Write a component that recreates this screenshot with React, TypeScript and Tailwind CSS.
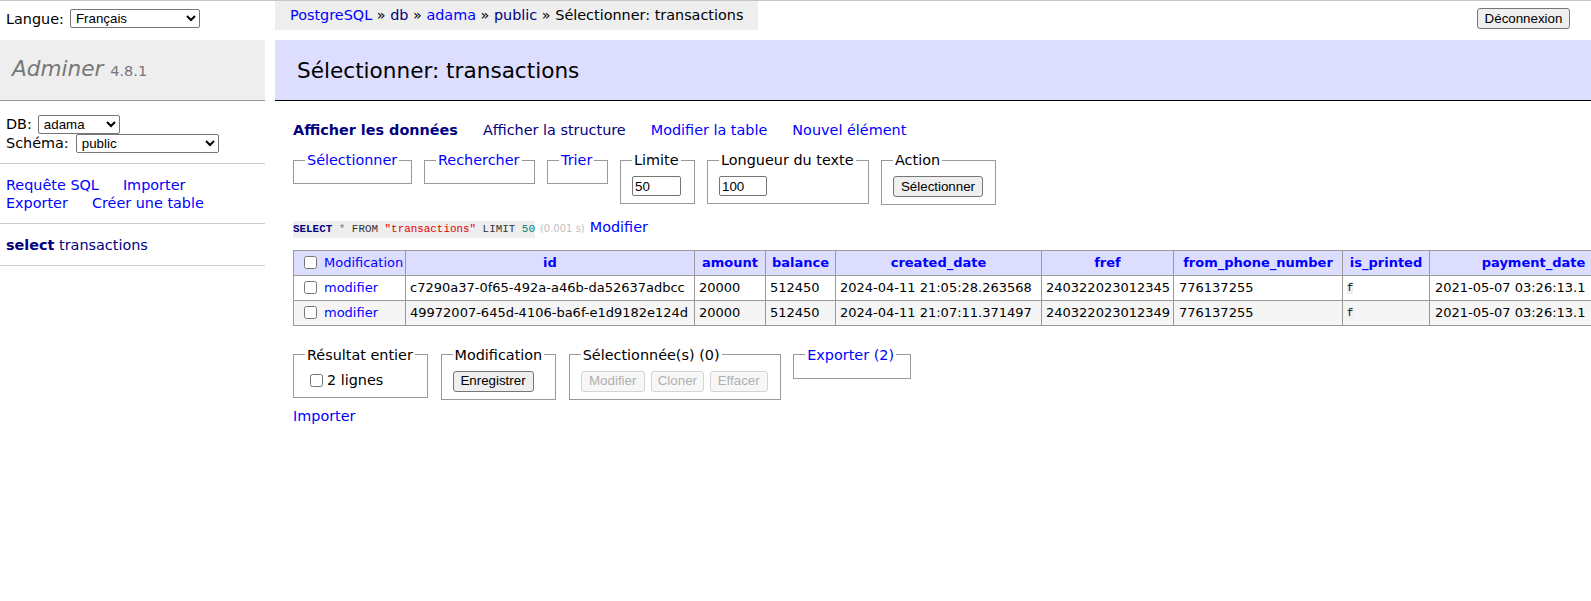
import React from 'react'

type Row = {
  id: string
  amount: string
  balance: string
  created: string
  fref: string
  phone: string
  printed: string
  payment: string
}

const rows: Row[] = [
  {
    id: 'c7290a37-0f65-492a-a46b-da52637adbcc',
    amount: '20000',
    balance: '512450',
    created: '2024-04-11 21:05:28.263568',
    fref: '240322023012345',
    phone: '776137255',
    printed: 'f',
    payment: '2021-05-07 03:26:13.1',
  },
  {
    id: '49972007-645d-4106-ba6f-e1d9182e124d',
    amount: '20000',
    balance: '512450',
    created: '2024-04-11 21:07:11.371497',
    fref: '240322023012349',
    phone: '776137255',
    printed: 'f',
    payment: '2021-05-07 03:26:13.1',
  },
]

const headers = ['id', 'amount', 'balance', 'created_date', 'fref', 'from_phone_number', 'is_printed', 'payment_date']

const sysFont = "font-['Liberation_Sans',Arial,sans-serif] text-[13.33px]"

function Button({ children, disabled, className = '' }: { children: React.ReactNode; disabled?: boolean; className?: string }) {
  return (
    <button
      type="button"
      disabled={disabled}
      className={
        disabled
          ? `h-[21px] rounded-[3px] border border-[#d4d4d4] bg-[#f7f7f7] px-[6px] text-[#b0b0b0] ${sysFont} ${className}`
          : `h-[21px] rounded-[3px] border border-[#767676] bg-[#efefef] px-[6px] text-black ${sysFont} ${className}`
      }
    >
      {children}
    </button>
  )
}

function Box({ legend, width, link, children }: { legend: string; width: string; link?: boolean; children?: React.ReactNode }) {
  return (
    <fieldset className={`shrink-0 border border-[#999] px-[11px] pt-[7px] pb-[7px] ${width}`}>
      <legend className={`px-[2px] ${link ? 'text-[#0000ff]' : 'text-black'}`}>{legend}</legend>
      {children}
    </fieldset>
  )
}

function Sidebar() {
  return (
    <aside className="w-[265px] shrink-0">
      <div className="flex h-[39px] items-start pl-[6px] pt-[8px]">
        <div className="flex items-center">
          Langue:
          <select defaultValue="fr" className={`ml-[6px] h-[19px] w-[130px] rounded-[2px] border border-[#767676] bg-white pl-[1px] text-black ${sysFont}`}>
            <option value="fr">Français</option>
          </select>
        </div>
      </div>
      <h1 className="flex h-[61px] items-center border-b border-[#999] bg-[#eee] pl-[12px] text-[21.6px] font-normal leading-[27px] text-[#777]">
        <span>
          <span className="italic">Adminer</span> <span className="text-[14.5px]">4.8.1</span>
        </span>
      </h1>
      <div className="border-b border-[#ccc] px-[6px] pt-[13.5px] pb-[10.5px]">
        <div className="flex h-[19px] items-center">
          DB:
          <select defaultValue="adama" className={`ml-[6px] h-[19px] w-[82px] rounded-[2px] border border-[#767676] bg-white pl-[1px] text-black ${sysFont}`}>
            <option value="adama">adama</option>
          </select>
        </div>
        <div className="flex h-[19px] items-center">
          Schéma:
          <select defaultValue="public" className={`ml-[7px] h-[19px] w-[143px] rounded-[2px] border border-[#767676] bg-white pl-[1px] text-black ${sysFont}`}>
            <option value="public">public</option>
          </select>
        </div>
      </div>
      <div className="border-b border-[#ccc] px-[6px] py-[11.5px] text-[#0000ff]">
        <div className="flex gap-[24px]">
          <a>Requête SQL</a>
          <a>Importer</a>
        </div>
        <div className="flex gap-[24px]">
          <a>Exporter</a>
          <a>Créer une table</a>
        </div>
      </div>
      <div className="border-b border-[#ccc] px-[6px] py-[11.5px] text-[#000080]">
        <a className="font-bold">select</a> <a>transactions</a>
      </div>
    </aside>
  )
}

function DataTable() {
  return (
    <table className="mt-[11.5px] w-[1344px] table-fixed border-collapse text-[13px] leading-[16px]">
      <colgroup>
        <col className="w-[112px]" />
        <col className="w-[289px]" />
        <col className="w-[71px]" />
        <col className="w-[70px]" />
        <col className="w-[206px]" />
        <col className="w-[132px]" />
        <col className="w-[169px]" />
        <col className="w-[87px]" />
        <col className="w-[208px]" />
      </colgroup>
      <thead>
        <tr className="h-[25px] bg-[#ddf]">
          <td className="border border-[#999] px-[4px] whitespace-nowrap">
            <span className="flex items-center">
              <input type="checkbox" className="ml-[6px] mr-[7px] h-[13px] w-[13px]" />
              <a className="text-[#0000ff]">Modification</a>
            </span>
          </td>
          {headers.map((h) => (
            <th key={h} className="overflow-hidden border border-[#999] px-[6px] text-center font-bold whitespace-nowrap text-[#0000ff]">
              {h}
            </th>
          ))}
        </tr>
      </thead>
      <tbody>
        {rows.map((r, i) => (
          <tr key={r.id} className={i % 2 ? 'h-[25px] bg-[#f5f5f5]' : 'h-[25px] bg-white'}>
            <td className="border border-[#999] px-[4px] whitespace-nowrap">
              <span className="flex items-center">
                <input type="checkbox" className="ml-[6px] mr-[7px] h-[13px] w-[13px]" />
                <a className="text-[#0000ff]">modifier</a>
              </span>
            </td>
            <td className="overflow-hidden border border-[#999] px-[4px] whitespace-nowrap">{r.id}</td>
            <td className="overflow-hidden border border-[#999] px-[4px] whitespace-nowrap">{r.amount}</td>
            <td className="overflow-hidden border border-[#999] px-[4px] whitespace-nowrap">{r.balance}</td>
            <td className="overflow-hidden border border-[#999] px-[4px] whitespace-nowrap">{r.created}</td>
            <td className="overflow-hidden border border-[#999] px-[4px] whitespace-nowrap">{r.fref}</td>
            <td className="overflow-hidden border border-[#999] px-[5px] whitespace-nowrap">{r.phone}</td>
            <td className="overflow-hidden border border-[#999] px-[4px] whitespace-nowrap">
              <code className="bg-[#eee] font-['Liberation_Mono',monospace] text-[10.4px]">{r.printed}</code>
            </td>
            <td className="overflow-hidden border border-[#999] px-[5px] whitespace-nowrap">{r.payment}</td>
          </tr>
        ))}
      </tbody>
    </table>
  )
}

function Content() {
  return (
    <main className="ml-[10px] min-w-0 flex-1">
      <div className="flex h-[39px] items-start justify-between">
        <div className="h-[29px] bg-[#eee] px-[15px] leading-[28px] whitespace-nowrap">
          <a className="text-[#0000ff]">PostgreSQL</a> » <a className="text-[#000080]">db</a> »{' '}
          <a className="text-[#0000ff]">adama</a> » <a className="text-[#000080]">public</a> » Sélectionner: transactions
        </div>
        <Button className="mt-[7px] mr-[21px] w-[93px]">Déconnexion</Button>
      </div>
      <h2 className="flex h-[61px] items-center border-b border-black bg-[#ddf] pl-[22px] text-[21.6px] font-normal leading-[27px] text-black">
        Sélectionner: transactions
      </h2>

      <div className="pl-[18px]">
        <nav className="mt-[20px] flex gap-[25px] whitespace-nowrap">
          <a className="font-bold text-[#000080]">Afficher les données</a>
          <a className="text-[#000080]">Afficher la structure</a>
          <a className="text-[#0000ff]">Modifier la table</a>
          <a className="text-[#0000ff]">Nouvel élément</a>
        </nav>

        <div className="mt-[12px] flex items-start gap-[12px]">
          <Box legend="Sélectionner" width="w-[119px]" link />
          <Box legend="Rechercher" width="w-[111px]" link />
          <Box legend="Trier" width="w-[61px]" link />
          <Box legend="Limite" width="w-[75px]">
            <input defaultValue="50" className={`block h-[20px] w-[49px] rounded-[2px] border border-[#767676] px-[2px] text-black ${sysFont}`} />
          </Box>
          <Box legend="Longueur du texte" width="w-[162px]">
            <input defaultValue="100" className={`block h-[20px] w-[48px] rounded-[2px] border border-[#767676] px-[2px] text-black ${sysFont}`} />
          </Box>
          <Box legend="Action" width="w-[115px]">
            <Button className="block h-[20px] w-[90px]">Sélectionner</Button>
          </Box>
        </div>

        <p className="mt-[13px] flex items-baseline whitespace-nowrap">
          <code className="bg-[#eee] font-['Liberation_Mono',monospace] text-[10.9px] leading-[17px]">
            <span className="font-semibold text-[#000080]">SELECT</span> <span className="text-[#777]">*</span>{' '}
            <span className="text-[#333]">FROM</span> <span className="text-[#e00000]">"transactions"</span>{' '}
            <span className="text-[#333]">LIMIT</span> <span className="text-[#008080]">50</span>
          </code>
          <span className="ml-[5px] text-[10px] text-[#c0c0c0]">(0.001 s)</span>
          <a className="ml-[5px] text-[#0000ff]">Modifier</a>
        </p>

        <DataTable />

        <div className="mt-[20px] flex items-start gap-[12.5px]">
          <Box legend="Résultat entier" width="w-[135px]">
            <label className="flex h-[19.5px] items-center">
              <input type="checkbox" className="ml-[5px] mr-[4px] h-[13px] w-[13px]" />2 lignes
            </label>
          </Box>
          <Box legend="Modification" width="w-[115px]">
            <Button className="block w-[81px]">Enregistrer</Button>
          </Box>
          <Box legend="Sélectionnée(s) (0)" width="w-[212px]">
            <div className="flex gap-[6px]">
              <Button disabled className="w-[64px]">Modifier</Button>
              <Button disabled className="w-[53px]">Cloner</Button>
              <Button disabled className="w-[58px]">Effacer</Button>
            </div>
          </Box>
          <Box legend="Exporter (2)" width="w-[118px]" link />
        </div>

        <p className="mt-[7.5px]">
          <a className="text-[#0000ff]">Importer</a>
        </p>
      </div>
    </main>
  )
}

export default function App() {
  return (
    <div className="h-[601px] w-[1591px] overflow-hidden bg-white font-['DejaVu_Sans',Verdana,sans-serif] text-[14.4px] leading-[18px] text-black">
      <div className="h-px bg-[#cdc1bf]" />
      <div className="flex">
        <Sidebar />
        <Content />
      </div>
    </div>
  )
}
